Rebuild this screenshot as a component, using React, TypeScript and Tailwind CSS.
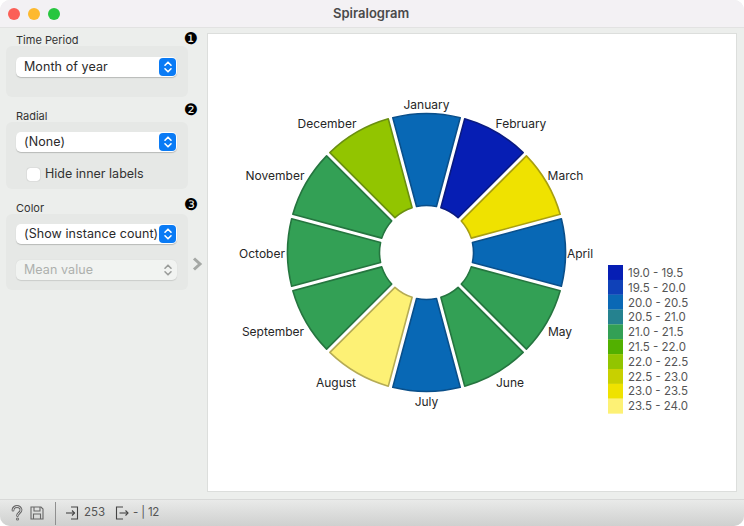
import React from "react";

const FONT = "font-['Inter','Liberation_Sans',sans-serif]";
const BLUE = "#0868b5";
const GREEN = "#33a055";
const months: [string, string, string, number, number][] = [
  ["January", BLUE, "#0a4f8a", 426.5, 109],
  ["February", "#061eb4", "#0a1a80", 521, 127.5],
  ["March", "#efe200", "#a89f10", 565.5, 179.5],
  ["April", BLUE, "#0a4f8a", 580, 257.5],
  ["May", GREEN, "#25753f", 560, 335.5],
  ["June", GREEN, "#25753f", 510, 386.5],
  ["July", BLUE, "#0a4f8a", 426.5, 405.5],
  ["August", "#fdf175", "#b5ab55", 336, 386.5],
  ["September", GREEN, "#25753f", 273, 335.5],
  ["October", GREEN, "#25753f", 262, 257.5],
  ["November", GREEN, "#25753f", 275, 179.5],
  ["December", "#92c500", "#6a8f10", 327, 127.5],
];
const legend: [string, string][] = [
  ["19.0 - 19.5", "#061eb4"],
  ["19.5 - 20.0", "#0f41b8"],
  ["20.0 - 20.5", "#0a68b5"],
  ["20.5 - 21.0", "#25828f"],
  ["21.0 - 21.5", "#33a055"],
  ["21.5 - 22.0", "#52b000"],
  ["22.0 - 22.5", "#92c500"],
  ["22.5 - 23.0", "#c8d000"],
  ["23.0 - 23.5", "#efe200"],
  ["23.5 - 24.0", "#fdf175"],
];

const CX = 426.5;
const CY = 252.5;
const RO = 139;
const RI = 47;
const GAP = 2.3;

function pt(r: number, deg: number) {
  const a = (deg * Math.PI) / 180;
  return `${(CX + r * Math.sin(a)).toFixed(2)} ${(CY - r * Math.cos(a)).toFixed(2)}`;
}
function wedge(i: number) {
  const start = i * 30 - 15;
  const end = start + 30;
  const dO = (Math.asin(GAP / RO) * 180) / Math.PI;
  const dI = (Math.asin(GAP / RI) * 180) / Math.PI;
  return `M${pt(RO, start + dO)} A${RO} ${RO} 0 0 1 ${pt(RO, end - dO)} L${pt(RI, end - dI)} A${RI} ${RI} 0 0 0 ${pt(RI, start + dI)} Z`;
}

function Stepper({ disabled }: { disabled?: boolean }) {
  return (
    <span
      className={`flex h-[18px] w-[17px] items-center justify-center rounded-[4px] ${disabled ? "" : "bg-[#0a7bf5]"}`}
    >
      <svg width="10" height="14" viewBox="0 0 10 14" fill="none" stroke={disabled ? "#9a9c9a" : "#fff"} strokeWidth="1.6" strokeLinecap="round" strokeLinejoin="round">
        <path d="M2 5.2 5 2.2 8 5.2" />
        <path d="M2 8.8 5 11.8 8 8.8" />
      </svg>
    </span>
  );
}

function Select({ label, disabled }: { label: string; disabled?: boolean }) {
  return (
    <div
      className={`flex h-[20px] w-[161px] items-center justify-between rounded-[5px] pl-[8px] pr-[1px] text-[12.5px] ${disabled ? "bg-[#f1f3f1] text-[#adb0ad] shadow-[0_0.5px_1px_rgba(0,0,0,0.12)]" : "bg-white text-[#2a2a2a] shadow-[0_1px_1px_rgba(0,0,0,0.2)]"}`}
    >
      <span className="whitespace-nowrap pt-px tracking-[0.08px]">{label}</span>
      <Stepper disabled={disabled} />
    </div>
  );
}

function Section({ title, badge, badgeClass, height, children }: { title: string; badge: string; badgeClass: string; height: string; children: React.ReactNode }) {
  return (
    <div className="flex flex-col">
      <div className="flex h-[12px] w-[192px] items-center justify-between pl-[10px]">
        <span className="text-[11px] leading-[12px] text-[#333]">{title}</span>
        <span className={`font-['DejaVu_Sans'] text-[16px] leading-[12px] text-black ${badgeClass}`}>{badge}</span>
      </div>
      <div className={`flex w-[182px] flex-col rounded-[6px] bg-[#e6e8e6] px-[10px] pt-[10px] ${height}`}>{children}</div>
    </div>
  );
}

export default function App() {
  return (
    <div className={`flex h-[526px] w-[744px] flex-col overflow-hidden rounded-[10px] bg-[#eceeec] ${FONT}`}>
      <div className="flex h-[28px] shrink-0 items-center border-b border-[#e2e2e2] bg-[#f3f1f4] pl-[8px]">
        <div className="flex gap-[8px]">
          <span className="h-[12px] w-[12px] rounded-full bg-[#fb5f57]" />
          <span className="h-[12px] w-[12px] rounded-full bg-[#fdb92e]" />
          <span className="h-[12px] w-[12px] rounded-full bg-[#27c63f]" />
        </div>
        <span className="ml-[273px] text-[13px] font-semibold text-[#4a4a4a]">Spiralogram</span>
      </div>

      <div className="flex min-h-0 flex-1">
        <div className="flex w-[207px] shrink-0 pl-[6px]">
          <div className="flex w-[182px] flex-col gap-[13px] pt-[6px]">
            <Section title="Time Period" badge="❶" badgeClass="-translate-y-px" height="h-[51px] pt-[11px]">
              <Select label="Month of year" />
            </Section>
            <Section title="Radial" badge="❷" badgeClass="-translate-y-[6px]" height="h-[67px]">
              <Select label="(None)" />
              <label className="ml-[11px] mt-[14px] flex items-center gap-[5px] text-[12.5px] leading-[16px] text-[#333]">
                <span className="h-[13px] w-[13px] rounded-[3px] bg-white shadow-[0_0_1px_rgba(0,0,0,0.4)]" />
                Hide inner labels
              </label>
            </Section>
            <Section title="Color" badge="❸" badgeClass="-translate-y-[3px]" height="h-[76px]">
              <Select label="(Show instance count)" />
              <div className="mt-[16px]">
                <Select label="Mean value" disabled />
              </div>
            </Section>
          </div>
          <svg className="ml-[3px] self-center" width="12" height="14" viewBox="0 0 12 14" fill="none" stroke="#a5a8a5" strokeWidth="3" strokeLinejoin="miter">
            <path d="M3 1.5 9 7 3 12.5" />
          </svg>
        </div>

        <div className="mb-[7px] mr-[7px] mt-[5px] min-w-0 flex-1 border border-[#dcdedc] bg-white">
          <svg className="h-full w-full" viewBox="208 34 528 457">
            {months.map((m, i) => (
              <path key={m[0]} d={wedge(i)} fill={m[1]} stroke={m[2]} strokeWidth="1.6" strokeLinejoin="round" />
            ))}
            {months.map((m) => (
              <text key={m[0]} x={m[3]} y={m[4]} textAnchor="middle" fontSize="12" fill="#262626">
                {m[0]}
              </text>
            ))}
            {legend.map(([t, c], i) => (
              <g key={t}>
                <rect x="608" y={265 + i * 14.85} width="15" height="15" fill={c} />
                <text x="628" y={277 + i * 14.8} fontSize="11.5" fill="#555">
                  {t}
                </text>
              </g>
            ))}
          </svg>
        </div>
      </div>

      <div className="flex h-[27px] shrink-0 items-center border-t border-[#d8d9d8] bg-gradient-to-b from-[#e9eae9] to-[#cfd0cf] pl-[10px] text-[11.5px] text-[#555]">
        <svg width="14" height="16" viewBox="0 0 14 16" fill="none" strokeLinecap="round">
          <path d="M3 5.2C3 2.8 5 1.5 7 1.5s4 1.3 4 3.5c0 2.8-3.5 2.8-3.5 5.6" stroke="#666" strokeWidth="2.8" />
          <path d="M7.5 14v.1" stroke="#666" strokeWidth="3" />
          <path d="M3 5.2C3 2.8 5 1.5 7 1.5s4 1.3 4 3.5c0 2.8-3.5 2.8-3.5 5.6" stroke="#ddd" strokeWidth="1" />
          <path d="M7.5 14v.1" stroke="#ddd" strokeWidth="1" />
        </svg>
        <svg className="ml-[6px]" width="14" height="14" viewBox="0 0 14 14" fill="none" stroke="#666" strokeWidth="1.1">
          <path d="M1 1H11L13 3V13H1Z" />
          <path d="M4 1V5H10V1" />
          <path d="M3.5 13V8H10.5V13" />
        </svg>
        <span className="ml-[11px] h-[23px] w-px bg-[#8f8f8f]" />
        <svg className="ml-[9px]" width="14" height="14" viewBox="0 0 14 14" fill="none" stroke="#444" strokeWidth="1.1">
          <path d="M6 1H12.5V13H6" />
          <path d="M1 7H9.5" />
          <path d="M7 4.5 9.5 7 7 9.5" />
        </svg>
        <span className="ml-[5px]">253</span>
        <svg className="ml-[10px]" width="14" height="14" viewBox="0 0 14 14" fill="none" stroke="#444" strokeWidth="1.1">
          <path d="M8 1H1.5V13H8" />
          <path d="M4.5 7H13" />
          <path d="M10.5 4.5 13 7 10.5 9.5" />
        </svg>
        <span className="ml-[4px] tracking-[-0.2px]">- | 12</span>
      </div>
    </div>
  );
}
